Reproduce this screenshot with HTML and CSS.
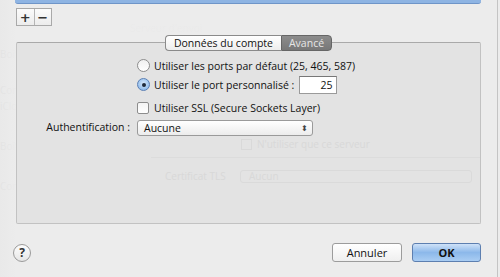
FILE: index.html
```html
<html>
<head>
	<link rel="stylesheet" href="styles.css">
</head>
<body>
	<div class="backdrop">
		<span class="ghost" style="left:130px;top:22px">Serveur d'envoi</span>
		<span class="ghost" style="left:0;top:48px">Boîte</span>
		<span class="ghost" style="left:0;top:84px">Compte iCloud</span>
		<span class="ghost" style="left:0;top:100px">iCloud Mail</span>
		<span class="ghost" style="left:0;top:140px">Boîte</span>
		<span class="ghost" style="left:0;top:180px">Comptes</span>
	</div>

	<div class="sheet">
		<div class="topbar"></div>

		<div class="plusminus">
			<span class="pm">+</span><span class="pm">&minus;</span>
		</div>

		<div class="panel">
			<div class="tabs">
				<span class="tab">Données du compte</span><span class="tab active">Avancé</span>
			</div>

			<div class="form">
				<div class="label"></div>
				<div class="ctl"><span class="radio"></span>Utiliser les ports par défaut (25, 465, 587)</div>

				<div class="label"></div>
				<div class="ctl"><span class="radio on"></span>Utiliser le port personnalisé :<span class="field">25</span></div>

				<div class="label"></div>
				<div class="ctl sp"><span class="check"></span>Utiliser SSL (Secure Sockets Layer)</div>

				<div class="label">Authentification :</div>
				<div class="ctl"><span class="popup">Aucune<span class="arrows">&#x2B0D;</span></span></div>
			</div>

			<div class="ghostrows">
				<div class="ghostline"><span class="gbox"></span>N'utiliser que ce serveur</div>
				<div class="ghostrule"></div>
				<div class="ghostline tls"><span class="glabel">Certificat TLS</span><span class="gpop">Aucun</span></div>
			</div>
		</div>

		<div class="footer">
			<span class="help">?</span>
			<div class="buttons">
				<span class="btn">Annuler</span>
				<span class="btn ok">OK</span>
			</div>
		</div>
	</div>
</body>
</html>
```

FILE: styles.css
```css
body {
	margin: 0;
	background: #ececec;
	font-family: "Open Sans", "DejaVu Sans", sans-serif;
	font-size: 10.5px;
	color: #111;
	overflow: hidden;
}

.backdrop {
	position: absolute;
	left: 0;
	top: 0;
	width: 500px;
	height: 277px;
}
.ghost {
	position: absolute;
	color: #dedede;
	font-size: 10px;
	line-height: 12px;
}

.sheet {
	position: relative;
	width: 497px;
	height: 277px;
	border-right: 1px solid #c4c4c4;
	background: linear-gradient(to right, rgba(230,230,230,0.5) 0, rgba(236,236,236,0.85) 16px, rgba(236,236,236,0.9) 100%);
}

.topbar {
	margin: 0 16px 0 15px;
	height: 3px;
	background: #8eb4e3;
	border-bottom: 1px solid #6f95c8;
	border-radius: 0 0 3px 3px;
}

.plusminus {
	display: flex;
	margin: 4px 0 0 16px;
	width: 36px;
	height: 18px;
	border: 1px solid #a9a9a9;
	background: linear-gradient(#fbfbfb, #ececec);
	box-sizing: border-box;
}
.pm {
	flex: 1;
	display: flex;
	align-items: center;
	justify-content: center;
	font-family: "DejaVu Sans", sans-serif;
	font-size: 13px;
	font-weight: bold;
	color: #333;
}
.pm + .pm {
	border-left: 1px solid #b5b5b5;
}

.panel {
	margin: 16px 0 0 16px;
	width: 465px;
	height: 182px;
	box-sizing: border-box;
	border: 1px solid #c2c2c2;
	border-top-color: #a9a9a9;
	background: #e3e3e3;
	border-radius: 2px;
}

.tabs {
	display: flex;
	justify-content: center;
	margin-top: -8px;
}
.tab {
	height: 16px;
	line-height: 14px;
	padding: 0 8px;
	border: 1px solid #8a8a8a;
	background: linear-gradient(#ffffff, #ededed);
	box-sizing: border-box;
}
.tab:first-child {
	border-radius: 4px 0 0 4px;
	border-right: none;
}
.tab.active {
	border-radius: 0 4px 4px 0;
	background: linear-gradient(#8c8c8c, #777);
	border-color: #666;
	color: #e6e6e6;
	padding: 0 7px;
}

.form {
	display: grid;
	grid-template-columns: 113px auto;
	column-gap: 7px;
	margin-top: 5px;
	align-items: center;
}
.label {
	text-align: right;
}
.ctl {
	display: flex;
	align-items: center;
	min-height: 19px;
}
.ctl.sp {
	margin-top: 4px;
}

.radio {
	width: 11px;
	height: 11px;
	border-radius: 50%;
	border: 1px solid #8d8d8d;
	background: linear-gradient(#f0f0f0, #ffffff);
	margin-right: 4px;
	display: flex;
	align-items: center;
	justify-content: center;
}
.radio.on {
	border-color: #5a7fb5;
	background: radial-gradient(circle at 50% 40%, #d6e8fb, #7aaee6);
}
.radio.on:after {
	content: "";
	width: 4px;
	height: 4px;
	border-radius: 50%;
	background: #1e2a3a;
}

.check {
	width: 10px;
	height: 10px;
	border: 1px solid #8d8d8d;
	border-radius: 2px;
	background: linear-gradient(#f4f4f4, #fff);
	margin-right: 5px;
}

.field {
	width: 38px;
	height: 18px;
	box-sizing: border-box;
	margin-left: 5px;
	border: 1px solid #9a9a9a;
	border-top-color: #777;
	background: #fff;
	text-align: right;
	padding-right: 4px;
	line-height: 16px;
}

.popup {
	display: flex;
	justify-content: space-between;
	align-items: center;
	width: 176px;
	height: 16px;
	box-sizing: border-box;
	border: 1px solid #9a9a9a;
	border-radius: 3px;
	background: linear-gradient(#ffffff, #ececec);
	padding: 0 4px 0 6px;
	margin-top: 3px;
}
.arrows {
	font-family: "DejaVu Sans", sans-serif;
	font-size: 8px;
	color: #444;
}

.ghostrows {
	margin: 1px 0 0 148px;
	color: #d8d8d8;
	font-size: 10px;
}
.ghostline {
	display: flex;
	align-items: center;
	padding-left: 76px;
}
.gbox {
	width: 9px;
	height: 9px;
	border: 1px solid #d9d9d9;
	margin-right: 5px;
}
.ghostrule {
	height: 1px;
	background: #dcdcdc;
	margin: 6px 0 0 -14px;
}
.ghostline.tls {
	margin-top: 11px;
	padding-left: 0;
}
.glabel {
	width: 75px;
}
.gpop {
	width: 232px;
	height: 13px;
	line-height: 11px;
	border: 1px solid #dadada;
	border-radius: 3px;
	padding-left: 8px;
	box-sizing: border-box;
}

.footer {
	display: flex;
	align-items: center;
	justify-content: space-between;
	margin: 19px 16px 0 13px;
}
.help {
	width: 18px;
	height: 18px;
	border-radius: 50%;
	border: 1px solid #9a9a9a;
	background: linear-gradient(#fdfdfd, #e6e6e6);
	display: flex;
	align-items: center;
	justify-content: center;
	font-size: 12px;
	font-weight: bold;
	color: #333;
	box-sizing: border-box;
}
.buttons {
	display: flex;
	gap: 10px;
}
.btn {
	width: 70px;
	height: 19px;
	box-sizing: border-box;
	border: 1px solid #9c9c9c;
	border-radius: 3px;
	background: linear-gradient(#ffffff, #efefef);
	text-align: center;
	line-height: 17px;
	font-size: 11px;
}
.btn.ok {
	width: 69px;
	border-color: #5d7fb0;
	background: linear-gradient(#cfe2f8, #8cb8ea 50%, #a9cdf3);
	font-weight: bold;
}
```
